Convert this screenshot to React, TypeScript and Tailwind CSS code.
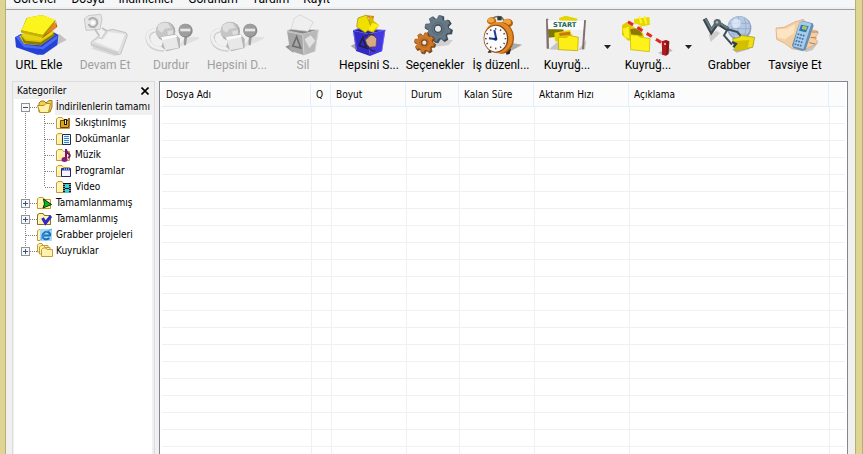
import type { ReactNode } from "react";

const MENU = ["Görevler", "Dosya", "İndirilenler", "Görünüm", "Yardım", "Kayıt"];

/* ---------- toolbar artwork ---------- */

function Art({ x, children }: { x: number; children: ReactNode }) {
  return (
    <svg viewBox={`${x} 36 168 132`} className="h-11 w-14" aria-hidden="true">
      {children}
    </svg>
  );
}

function AddUrlArt() {
  return (
    <Art x={33}>
      <path d="M120 160 L200 120 L178 102 Z" fill="#c2c2c2" />
      <path d="M45 112 L62 102 L160 96 L175 104 L172 135 L130 164 L112 164 L48 142 Z" fill="#2442d8" />
      <path d="M48 112 L62 104 L76 134 L126 140 L172 106 L172 116 L130 148 L72 142 Z" fill="#4b6cf2" />
      <path d="M58 108 L72 132 L122 136 L164 106 L150 90 Z" fill="#d8c400" />
      <path d="M62 104 L76 122 L122 127 L164 100 L164 106 L122 136 L72 130 Z" fill="#8b7a00" />
      <path d="M62 104 L90 94 L160 92 L162 98 L122 122 L78 118 Z" fill="#e6d410" />
      <path d="M120 108 L170 72 L172 80 L128 114 Z" fill="#a8550c" />
      <path d="M138 82 L170 66 L168 84 L136 104 Z" fill="#e8832a" />
      <path d="M62 96 L80 54 L126 45 L168 62 L130 112 Z" fill="#a99600" />
      <path d="M64 91 L82 53 L126 45 L166 59 L128 105 Z" fill="#fbf51d" />
      <path d="M64 91 L128 105 L130 113 L64 98 Z" fill="#c9b100" />
    </Art>
  );
}

function ResumeArt() {
  return (
    <Art x={231}>
      <path d="M282 140 L355 164 L345 168 L275 146 Z" fill="#d9d9d9" />
      <path d="M253 56 L265 47 L302 43 L306 56 L300 88 L258 91 Z" fill="#e6e6e6" stroke="#c8c8c8" strokeWidth="3" />
      <path d="M266 60 Q278 48 290 60 Q296 72 284 80 Q270 84 266 72" fill="none" stroke="#aeaeae" strokeWidth="6" />
      <circle cx="279" cy="68" r="6" fill="#fff" />
      <path d="M284 86 L298 108 M306 84 L322 94 L318 112 L300 120" stroke="#c4c4c4" strokeWidth="6" fill="none" />
      <path d="M274 126 L294 110 L304 116 L320 92 L338 88 L378 98 L382 106 L362 162 L352 164 L274 136 Z" fill="#e0e0e0" stroke="#c2c2c2" strokeWidth="3" />
      <path d="M282 124 L298 116 L310 118 L326 96 L374 103 L355 154 Z" fill="#f2f2f2" />
      <path d="M274 130 L355 156 L354 163 L274 137 Z" fill="#cecece" />
    </Art>
  );
}

function StopShape({ dx = 0 }: { dx?: number }) {
  return (
    <g transform={`translate(${dx} 0)`}>
      <path d="M530 144 L590 120 L602 112 L560 110 Z" fill="#e0e0e0" />
      <path d="M474 90 Q440 92 444 118 Q450 148 492 148" fill="none" stroke="#cfcfcf" strokeWidth="14" />
      <path d="M474 88 Q438 92 443 116 Q450 146 492 146" fill="none" stroke="#f0f0f0" strokeWidth="9" />
      <circle cx="497" cy="94" r="29" fill="#acacac" />
      <circle cx="494" cy="91" r="26" fill="#c6c6c6" />
      <path d="M474 76 Q486 64 504 70 L512 84 L494 86 L486 98 L474 90 Z M502 94 L520 90 L520 104 L506 110 Z" fill="#dfdfdf" />
      <path d="M494 110 L524 100 L540 116 L540 144 L500 154 L484 140 Z" fill="#b6b6b6" />
      <path d="M484 112 L528 104 L536 143 L496 151 Z" fill="#e8e8e8" />
      <path d="M484 112 L528 104 L531 111 L487 120 Z" fill="#fafafa" />
      <path d="M554 106 Q550 124 552 136 L558 136 L562 106 Z" fill="#9c9c9c" />
      <circle cx="557" cy="92" r="21" fill="#888" />
      <circle cx="555" cy="90" r="19" fill="#9e9e9e" />
      <rect x="541" y="86" width="30" height="8" fill="#e6e6e6" />
    </g>
  );
}

function DeleteArt() {
  return (
    <Art x={225}>
      <path d="M256 140 L280 128 L280 158 Z" fill="#909090" />
      <path d="M261 92 L276 86 L356 90 L308 102 Z" fill="#858585" stroke="#dadada" strokeWidth="2" />
      <path d="M282 56 L300 44 L340 66 L324 94 L274 88 Z" fill="#efefef" stroke="#cdcdcd" strokeWidth="2" />
      <path d="M261 92 L308 102 L312 166 L270 152 Z" fill="#a6a6a6" />
      <path d="M308 102 L356 90 L346 154 L312 166 Z" fill="#b9b9b9" />
      <path d="M278 138 L290 110 L302 144 Z" fill="none" stroke="#6c6c6c" strokeWidth="5" />
      <path d="M314 118 L332 106 L346 122 L328 144 Z" fill="#e2e2e2" />
      <path d="M262 95 L308 104 L312 166 M354 92 L345 152" stroke="#ddd" strokeWidth="2" fill="none" />
    </Art>
  );
}

function DeleteAllArt() {
  return (
    <Art x={423}>
      <path d="M452 138 L478 124 L474 154 Z" fill="#a8a8a8" />
      <path d="M459 92 L474 86 L556 91 L506 103 Z" fill="#24209b" stroke="#7775f2" strokeWidth="3" />
      <path d="M500 46 L522 48 L518 68 Z" fill="#e27b13" />
      <path d="M459 92 L506 103 L510 168 L468 153 Z" fill="#322ac4" />
      <path d="M506 103 L556 91 L546 154 L510 168 Z" fill="#4338e0" />
      <path d="M512 46 L522 64 L538 76 L520 98 L496 90 Z" fill="#d6be00" />
      <path d="M470 80 L474 54 L500 45 L514 82 L496 98 Z" fill="#f0e000" stroke="#9b8700" strokeWidth="2" />
      <path d="M518 68 L538 76 L516 94 L504 88 Z" fill="#ffef12" />
      <path d="M478 136 L488 114 L500 144 Z" fill="none" stroke="#221d58" strokeWidth="6" />
      <path d="M496 120 L516 102 L530 116 L528 140 L504 142 Z" fill="#d6aa83" stroke="#59433e" strokeWidth="2" />
      <path d="M486 116 Q500 100 522 105 M502 136 Q514 158 526 152" fill="none" stroke="#30254e" strokeWidth="4" />
      <path d="M461 96 L470 150 M554 94 L546 151" fill="none" stroke="#7d7aff" strokeWidth="2" />
    </Art>
  );
}

function Gear({ cx, cy, r, fill, dark }: { cx: number; cy: number; r: number; fill: string; dark: string }) {
  return (
    <g transform={`translate(${cx} ${cy})`}>
      {[0, 45, 90, 135, 180, 225, 270, 315].map((a) => (
        <path
          key={a}
          transform={`rotate(${a + 12})`}
          d={`M${-r * 0.3} ${-r * 0.7} L${-r * 0.18} ${-r * 1.18} H${r * 0.18} L${r * 0.3} ${-r * 0.7} Z`}
          fill={fill}
          stroke={dark}
          strokeWidth="1.500"
        />
      ))}
      <circle r={r * 0.62} fill="none" stroke={fill} strokeWidth={r * 0.6} />
      <circle r={r * 0.55} fill="none" stroke={dark} strokeWidth="2" opacity=".5" />
      <circle r={r * 0.33} fill="#e9e9e9" stroke={dark} strokeWidth="4" />
    </g>
  );
}

function OptionsArt() {
  return (
    <Art x={36}>
      <path d="M106 142 L130 118 L174 120 L160 136 Z" fill="#d0d0d4" />
      <Gear cx={132} cy={88} r={34} fill="#3b4a55" dark="#1e2a34" />
      <Gear cx={129} cy={86} r={33} fill="#667786" dark="#3f4d59" />
      <Gear cx={91} cy={131} r={26} fill="#8d4b10" dark="#5d300a" />
      <Gear cx={88} cy={128} r={25} fill="#cd7929" dark="#874a13" />
    </Art>
  );
}

function SchedulerArt() {
  return (
    <Art x={234}>
      <path d="M338 158 L382 134 L346 128 Z" fill="#aaa" />
      <path d="M284 148 L278 158 L290 158 Z M332 150 L348 146 L344 162 L334 164 Z" fill="#2d2925" />
      <path d="M292 56 Q308 44 322 54 L328 64" fill="none" stroke="#777" strokeWidth="5" />
      <rect x="307" y="49" width="13" height="12" fill="#373737" />
      <ellipse cx="290" cy="63" rx="14" ry="11" fill="#bd6710" />
      <ellipse cx="288" cy="61" rx="10" ry="7" fill="#f4a63c" />
      <ellipse cx="338" cy="69" rx="16" ry="13" fill="#b45c0c" />
      <ellipse cx="336" cy="66" rx="12" ry="9" fill="#f2a23a" />
      <ellipse cx="319" cy="114" rx="38" ry="47" fill="#a8570c" />
      <ellipse cx="310" cy="113" rx="43" ry="47" fill="#e18a25" />
      <ellipse cx="303" cy="116" rx="37" ry="42" fill="#824211" />
      <ellipse cx="302" cy="116" rx="34" ry="39" fill="#fbfbfc" />
      {[0, 30, 60, 90, 120, 150, 180, 210, 240, 270, 300, 330].map((a) => (
        <rect key={a} x="300" y="84" width="4" height="5" fill="#6b4240" transform={`rotate(${a} 302 116)`} />
      ))}
      <path d="M304 118 L298 90 M303 118 L282 115" stroke="#203c8f" strokeWidth="6" />
      <circle cx="302" cy="117" r="5" fill="#182b6c" />
    </Art>
  );
}

function StartQueueArt() {
  return (
    <Art x={432}>
      <path d="M462 148 L490 124 L494 150 Z M550 150 L574 120 L570 148 Z" fill="#c5c5c5" />
      <path d="M492 54 L512 47 L548 56 L544 68 L494 64 Z" fill="#e4d500" />
      <path d="M459 88 L505 86 L508 108 L460 113 Z" fill="#7e7700" />
      <path d="M478 98 L525 90 L532 108 L520 130 L480 124 Z" fill="#e8d500" />
      <path d="M492 99 L525 95 L526 105 L494 108 Z" fill="#c87b10" />
      <path d="M490 112 L516 112 L522 106 L550 112 L548 152 L491 149 Z" fill="#fcee16" stroke="#ae9d00" strokeWidth="2" />
      <path d="M453 56 L460 56 L462 146 L455 146 Z M567 61 L573 60 L567 148 L561 148 Z" fill="#806f70" />
      <path d="M458 61 L567 63 L564 90 L460 87 Z" fill="#fafafa" />
      <text x="474" y="82" fontSize="20" fontWeight="700" fill="#17635d" fontFamily="DejaVu Sans, sans-serif">
        START
      </text>
    </Art>
  );
}

function StopQueueArt() {
  return (
    <Art x={90}>
      <path d="M204 158 L238 144 L248 152 L218 166 Z" fill="#bbb" />
      <path d="M132 57 L178 51 L180 74 L160 79 L132 70 Z" fill="#e7d800" />
      <path d="M148 49 L154 70 M163 49 L169 72" stroke="#fff32b" strokeWidth="6" />
      <path d="M96 76 L110 66 L140 82 L154 76 L162 112 L114 122 L96 104 Z" fill="#dfcc00" />
      <path d="M98 86 L116 80 L118 116 L104 112 Z" fill="#fff020" />
      <path d="M120 88 L146 84 L158 107 L124 104 Z" fill="#8a7a00" />
      <path d="M121 104 L143 106 L150 111 L180 116 L178 155 L122 149 Z" fill="#fff21b" stroke="#c0ad00" strokeWidth="2" />
      <path d="M114 65 L224 134" stroke="#f3f0ef" strokeWidth="9" />
      <path d="M114 65 L224 134" stroke="#df2723" strokeWidth="9" strokeDasharray="18 15" />
      <path d="M215 124 L228 120 L238 124 L236 162 L228 167 L217 164 Z" fill="#8f1416" />
      <path d="M216 124 L228 122 L228 166 L217 164 Z" fill="#b01a1d" />
      <circle cx="225" cy="132" r="3" fill="#efd1d1" />
    </Art>
  );
}

function GrabberArt() {
  return (
    <Art x={333}>
      <path d="M356 104 L380 92 L390 100 L362 126 Z" fill="#ccc" />
      <path d="M426 148 L494 128 L476 148 L440 158 Z" fill="#b6b6b6" />
      <circle cx="448" cy="84" r="36" fill="#8b9dbf" />
      <circle cx="447" cy="82" r="33" fill="#b5c9e4" />
      <path d="M418 70 H477 M414 86 H480 M421 102 H472 M430 56 Q420 82 434 112 M446 50 Q440 84 450 116 M462 54 Q474 80 462 110" stroke="#8fa3c8" strokeWidth="2" fill="none" />
      <circle cx="438" cy="70" r="14" fill="#edf4fc" opacity=".65" />
      <path d="M344 56 L364 94 L382 68 L414 88" fill="none" stroke="#35434a" strokeWidth="13" />
      <path d="M346 56 L364 89 L382 64 L414 86" fill="none" stroke="#6a7a82" strokeWidth="6" />
      <circle cx="382" cy="68" r="11" fill="#5a6971" />
      <circle cx="381" cy="67" r="4" fill="#aab4b8" />
      <path d="M414 86 L402 106 L426 134 M412 88 L442 96 L454 110" fill="none" stroke="#3d4d5c" strokeWidth="6" />
      <path d="M428 116 L448 112 L454 106 L494 112 L488 142 L436 152 Z" fill="#eee016" stroke="#9a8b00" strokeWidth="2" />
      <path d="M428 124 L478 120 L472 148 L436 152 Z" fill="#d3bf00" />
      <path d="M426 126 L438 132 L430 142" stroke="#33404a" strokeWidth="7" fill="none" />
    </Art>
  );
}

function TellFriendArt() {
  return (
    <Art x={531}>
      <path d="M634 148 L686 126 L668 150 L648 156 Z" fill="#c5c5c5" />
      <path d="M558 84 L582 82 L614 66 L640 58 L646 68 L624 82 L680 92 Q690 98 680 105 L674 118 Q688 120 678 132 L662 140 L638 152 L606 146 L584 130 L560 118 Z" fill="#f4cfa4" stroke="#d3a373" strokeWidth="2" />
      <path d="M560 88 L590 86 L616 72 L612 100 L584 118 L562 112 Z" fill="#fde4c2" />
      <path d="M666 96 L684 96 M662 112 L680 114 M658 128 L676 132" stroke="#b77c4c" strokeWidth="3" />
      <path d="M628 68 L638 62 L668 70 L671 77 L647 149 L638 153 L610 144 L606 136 Z" fill="#6790b6" />
      <path d="M628 68 L638 64 L664 71 L640 147 L610 139 Z" fill="#a7cbe8" />
      <path d="M633 74 L656 79 L648 97 L627 92 Z" fill="#2c77b4" />
      <path d="M638 77 L652 80 L648 90 L635 87 Z" fill="#b0c653" />
      {[0, 1, 2, 3].map((i) => (
        <path key={i} d={`M${623 - i * 3} ${102 + i * 10} l22 6`} stroke="#3f6fa4" strokeWidth="5" strokeDasharray="5 3" />
      ))}
    </Art>
  );
}

type Tool = { id: string; label: string; art: ReactNode; disabled?: boolean; menu?: boolean };

const TOOLS: Tool[] = [
  { id: "add", label: "URL Ekle", art: <AddUrlArt /> },
  { id: "resume", label: "Devam Et", art: <ResumeArt />, disabled: true },
  { id: "stop", label: "Durdur", art: <Art x={429}><StopShape /></Art>, disabled: true },
  { id: "stop-all", label: "Hepsini D...", art: <Art x={27}><StopShape dx={-406} /></Art>, disabled: true },
  { id: "delete", label: "Sil", art: <DeleteArt />, disabled: true },
  { id: "delete-all", label: "Hepsini S...", art: <DeleteAllArt /> },
  { id: "options", label: "Seçenekler", art: <OptionsArt /> },
  { id: "scheduler", label: "İş düzenl...", art: <SchedulerArt /> },
  { id: "queue-start", label: "Kuyruğ...", art: <StartQueueArt />, menu: true },
  { id: "queue-stop", label: "Kuyruğ...", art: <StopQueueArt />, menu: true },
  { id: "grabber", label: "Grabber", art: <GrabberArt /> },
  { id: "tell", label: "Tavsiye Et", art: <TellFriendArt /> },
];

function ToolButton({ tool }: { tool: Tool }) {
  return (
    <div className="flex shrink-0">
      <button
        type="button"
        disabled={tool.disabled}
        className="flex w-[66px] flex-col items-center gap-px whitespace-nowrap font-[Roboto,sans-serif] text-xs leading-4 text-black disabled:text-[#a0a0a0]"
      >
        {tool.art}
        {tool.label}
      </button>
      {tool.menu && (
        <button type="button" aria-label="Kuyruk seç" className="flex w-[15px] items-center justify-center">
          <svg viewBox="0 0 7 4" className="h-1 w-[7px]" aria-hidden="true">
            <path d="M0 0H7L3.5 4Z" fill="#222" />
          </svg>
        </button>
      )}
    </div>
  );
}

/* ---------- category tree ---------- */

type Kind = "open" | "zip" | "doc" | "music" | "app" | "video" | "pending" | "done" | "web" | "stack";

function Folder() {
  return (
    <>
      <path d="M.5 13.500V4L2 2.500H6L7.500 4.500H13.500V13.500Z" fill="#fff1a6" stroke="#c69932" />
      <path d="M1.500 12.500V6H12.500" fill="none" stroke="#fffbe0" />
    </>
  );
}

function TreeIcon({ kind }: { kind: Kind }) {
  return (
    <svg viewBox="0 0 16 16" className="h-4 w-4 shrink-0" aria-hidden="true">
      {kind === "open" ? (
        <>
          <path d="M2 13V4L4 2H7L9 4L12 1.500H15V8L13 13Z" fill="#f0ce59" stroke="#a47816" />
          <path d="M.5 6.500H7L9 4.500H13.500L11.500 13.500H3Z" fill="#fff2a6" stroke="#b88c20" />
        </>
      ) : kind === "stack" ? (
        <>
          <path d="M.5 9V2L2 .5H5L6 2.500H11V9Z" fill="#fff2af" stroke="#c79a35" />
          <path d="M2.500 11V4L4 2.500H7L8 4.500H13V11Z" fill="#fff2af" stroke="#c79a35" />
          <path d="M4.500 13.500V6.500L6 5H9L10 6.500H15.500V13.500Z" fill="#fff2af" stroke="#c79a35" />
        </>
      ) : (
        <Folder />
      )}
      {kind === "zip" && (
        <>
          <path d="M4.500 5.500H12.500V12.500H4.500Z" fill="#dda415" stroke="#69420b" />
          <path d="M12 3H14V11H12Z" fill="#a36b12" />
          <path d="M8 4H11V10H8Z" fill="#161616" />
          <path d="M9.500 5V9" stroke="#ffe37d" />
        </>
      )}
      {kind === "doc" && (
        <>
          <path d="M6.500 3.500H14.500V13.500H6.500Z" fill="#e9f5ff" stroke="#202c48" />
          <path d="M8 5.500H13M8 7.500H13M8 9.500H13M8 11.500H13" stroke="#3b82cc" />
        </>
      )}
      {kind === "music" && (
        <>
          <path d="M10 2V12M10 3Q11 6 13 7Q15 9 12 11" fill="none" stroke="#78166f" strokeWidth="2" />
          <ellipse cx="8.500" cy="12.500" rx="3" ry="2.500" fill="#8d1a83" />
        </>
      )}
      {kind === "app" && (
        <>
          <path d="M5.500 5.500H14.500V13.500H5.500Z" fill="#f3f6ff" stroke="#25256d" />
          <path d="M6 6.500H14" stroke="#3343bc" strokeWidth="2" />
          <path d="M8 6H9M10 6H11M12 6H13" stroke="#fff" />
        </>
      )}
      {kind === "video" && (
        <>
          <path d="M7 4H15V14H7Z" fill="#111" />
          <path d="M9 5H13V9H9ZM9 10H13V14H9Z" fill="#2bd6e3" />
          <path d="M8 5V14M14 5V14" stroke="#fff" strokeDasharray="1 1" />
        </>
      )}
      {kind === "pending" && <path d="M6.500 4L14.500 9.500L6 13L7.500 9Z" fill="#09b61c" stroke="#062f08" />}
      {kind === "done" && (
        <>
          <path d="M.5 13.500V4L2 2.500H6L7.500 4.500H13.500V13.500Z" fill="none" stroke="#83751b" />
          <path d="M5.500 7L8.500 12L14 5" fill="none" stroke="#3029c7" strokeWidth="3" />
        </>
      )}
      {kind === "web" && (
        <>
          <rect x="3" y="2" width="12" height="12" fill="#a8d9f6" />
          <path d="M12.500 11Q10 13 7.500 12Q4.500 10 6 7Q8 4 11 5Q13.500 6 13 8.500H6.500" fill="none" stroke="#1a71bd" strokeWidth="2" />
          <path d="M4 13Q5 6 15 2" fill="none" stroke="#4aa3e0" />
        </>
      )}
    </svg>
  );
}

type Node = { label: string; kind: Kind; level: 0 | 1; box?: "plus" | "minus"; first?: boolean; last?: boolean };

const NODES: Node[] = [
  { label: "İndirilenlerin tamamı", kind: "open", level: 0, box: "minus", first: true },
  { label: "Sıkıştırılmış", kind: "zip", level: 1 },
  { label: "Dokümanlar", kind: "doc", level: 1 },
  { label: "Müzik", kind: "music", level: 1 },
  { label: "Programlar", kind: "app", level: 1 },
  { label: "Video", kind: "video", level: 1, last: true },
  { label: "Tamamlanmamış", kind: "pending", level: 0, box: "plus" },
  { label: "Tamamlanmış", kind: "done", level: 0, box: "plus" },
  { label: "Grabber projeleri", kind: "web", level: 0 },
  { label: "Kuyruklar", kind: "stack", level: 0, box: "plus", last: true },
];

function Branch({ node }: { node: Node }) {
  const w = node.level ? 42 : 23;
  return (
    <svg width={w} height="16" viewBox={`0 0 ${w} 16`} className="shrink-0" aria-hidden="true">
      <g stroke="#808080" strokeDasharray="1 1" fill="none">
        <path d={`M11.500 ${node.first ? 8 : 0}V${node.last && !node.level ? 8 : 16}`} />
        {node.level ? <path d={`M30.500 0V${node.last ? 8 : 16}M31 8.500H41`} /> : <path d="M12 8.500H23" />}
      </g>
      {node.box && (
        <>
          <rect x="7.500" y="4.500" width="8" height="8" fill="#f8f8f8" stroke="#919191" />
          <path d={node.box === "plus" ? "M9 8.500H14M11.500 6V11" : "M9 8.500H14"} stroke="#31518c" />
        </>
      )}
    </svg>
  );
}

function Categories() {
  return (
    <aside className="flex w-[143px] shrink-0 flex-col border border-b-0 border-[#dcdcdc] font-['DejaVu_Sans_Condensed','DejaVu_Sans',sans-serif] text-[10px] leading-4 text-black">
      <header className="flex h-[17px] items-center justify-between px-1">
        <h2>Kategoriler</h2>
        <button type="button" aria-label="Kapat" className="p-px">
          <svg viewBox="0 0 8 8" className="h-2 w-2" aria-hidden="true">
            <path d="M.5 .5L7.500 7.500M7.500 .5L.5 7.500" stroke="#000" strokeWidth="1.600" />
          </svg>
        </button>
      </header>
      <ul className="mr-0.5 ml-px flex-1 overflow-hidden bg-white">
        {NODES.map((n) => (
          <li key={n.label}>
            <button type="button" className="flex h-4 w-full items-center whitespace-nowrap">
              <Branch node={n} />
              <TreeIcon kind={n.kind} />
              <span className={n.first ? "ml-0.5 flex-1 bg-[#f0f0f0] pl-px text-left" : "pl-[3px]"}>{n.label}</span>
            </button>
          </li>
        ))}
      </ul>
    </aside>
  );
}

/* ---------- download list ---------- */

const COLUMNS = [
  { label: "Dosya Adı", width: "w-[150px]" },
  { label: "Q", width: "w-5" },
  { label: "Boyut", width: "w-[75px]" },
  { label: "Durum", width: "w-[53px]" },
  { label: "Kalan Süre", width: "w-[75px]" },
  { label: "Aktarım Hızı", width: "w-[95px]" },
  { label: "Açıklama", width: "w-[200px]" },
  { label: "", width: "" },
];

const ROWS = Array.from({ length: 40 }, (_, i) => i);

function Downloads() {
  return (
    <main className="min-w-0 flex-1 overflow-hidden border border-b-0 border-[#828790] bg-white px-0.5 pt-px">
      <table className="w-full table-fixed border-separate border-spacing-0 font-['DejaVu_Sans_Condensed','DejaVu_Sans',sans-serif] text-[10px] text-black">
        <thead>
          <tr>
            {COLUMNS.map((c, i) => (
              <th key={i} scope="col" className={`${c.width} border-b border-[#e0effc] bg-[#fcfcfc] p-0 text-left font-normal`}>
                <div className={`h-[23px] pl-1 leading-6 whitespace-nowrap ${i < 7 ? "mr-px border-r border-[#e0effc]" : ""}`}>{c.label}</div>
              </th>
            ))}
          </tr>
        </thead>
        <tbody>
          {ROWS.map((r) => (
            <tr key={r} className="h-[17px]">
              {COLUMNS.map((c, i) => (
                <td key={i} className={`border-b border-[#f0f0f0] p-0 ${i < 7 ? "border-r" : ""}`} />
              ))}
            </tr>
          ))}
        </tbody>
      </table>
    </main>
  );
}

export default function App() {
  return (
    <div className="flex h-screen bg-[#ddd591]">
      <div className="ml-[5px] flex min-w-0 flex-1 border-l border-[#b8ae76]">
        <div className="flex min-w-0 flex-1 flex-col overflow-hidden bg-[#f0f0f0]">
          <nav className="flex h-[7px] shrink-0 items-end overflow-hidden bg-[#f5f6f7] font-[Roboto,sans-serif] text-xs leading-4 text-black">
            {MENU.map((m) => (
              <button key={m} type="button" className="px-[7px]">
                {m}
              </button>
            ))}
          </nav>
          <div role="toolbar" aria-label="Araçlar" className="flex h-[74px] shrink-0 border-t-2 border-[#f0f0f0]">
            <div className="flex flex-1 border-t border-[#a0a0a0] pt-0.5">
              {TOOLS.map((t) => (
                <ToolButton key={t.id} tool={t} />
              ))}
            </div>
          </div>
          <div className="flex min-h-0 flex-1 gap-1 pr-[7px] pl-1.5">
            <Categories />
            <Downloads />
          </div>
        </div>
        <div className="w-2 shrink-0 border-x border-[#b8ae76] bg-[#ddd591]" />
      </div>
    </div>
  );
}
